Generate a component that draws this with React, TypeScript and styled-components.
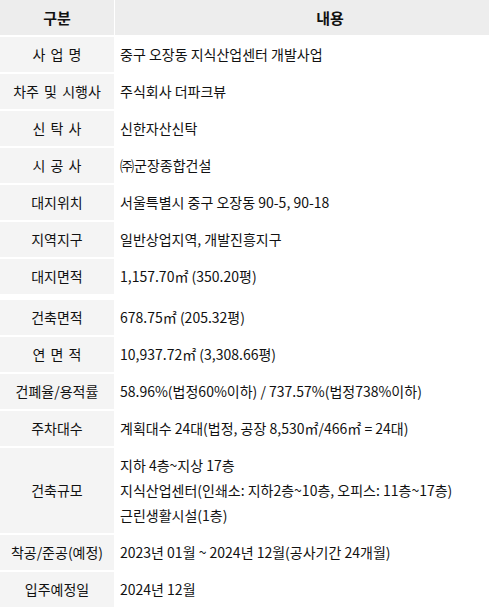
import styled, { createGlobalStyle } from "styled-components";

const GlobalStyle = createGlobalStyle`
  html, body {
    margin: 0;
    padding: 0;
    background: #fff;
    overflow: hidden;
  }
  body {
    font-family: "Noto Sans CJK KR", "Noto Sans", sans-serif;
    color: #111;
  }
`;

const Frame = styled.div`
  width: 489px;
  overflow: hidden;
`;

const Table = styled.table`
  width: 545px;
  border-collapse: separate;
  border-spacing: 0;
  table-layout: fixed;
  font-size: 14px;
`;

const HeadCell = styled.th<{ $first?: boolean }>`
  height: 35px;
  padding: 0;
  background: #ededed;
  font-size: 15px;
  font-weight: 700;
  color: #111;
  text-align: center;
  border-bottom: 2px solid #fff;
  border-right: ${(p) => (p.$first ? "1px solid #fff" : "none")};
  width: ${(p) => (p.$first ? "114px" : "auto")};
`;

const Label = styled.td<{ $break?: boolean }>`
  background: #f4f4f4;
  text-align: center;
  padding: 5px 0;
  line-height: 25px;
  color: #111;
  white-space: nowrap;
  word-spacing: 2px;
  border-right: 1px solid #fff;
  border-bottom: 2px solid #fff;
  border-top: ${(p) => (p.$break ? "4px solid #fff" : "none")};
`;

const Value = styled.td<{ $break?: boolean }>`
  padding: 5px 0 5px 5px;
  line-height: 25px;
  color: #111;
  white-space: nowrap;
  border-bottom: 2px solid #fff;
  border-top: ${(p) => (p.$break ? "4px solid #fff" : "none")};
`;

type Row = { label: string; lines: string[]; gap?: boolean };

const rows: Row[] = [
  { label: "사 업 명", lines: ["중구 오장동 지식산업센터 개발사업"] },
  { label: "차주 및 시행사", lines: ["주식회사 더파크뷰"] },
  { label: "신 탁 사", lines: ["신한자산신탁"] },
  { label: "시 공 사", lines: ["㈜군장종합건설"] },
  { label: "대지위치", lines: ["서울특별시 중구 오장동 90-5, 90-18"] },
  { label: "지역지구", lines: ["일반상업지역, 개발진흥지구"] },
  { label: "대지면적", lines: ["1,157.70㎡ (350.20평)"] },
  { label: "건축면적", lines: ["678.75㎡ (205.32평)"], gap: true },
  { label: "연 면 적", lines: ["10,937.72㎡ (3,308.66평)"] },
  { label: "건폐율/용적률", lines: ["58.96%(법정60%이하) / 737.57%(법정738%이하)"] },
  { label: "주차대수", lines: ["계획대수 24대(법정, 공장 8,530㎡/466㎡ = 24대)"] },
  {
    label: "건축규모",
    lines: [
      "지하 4층~지상 17층",
      "지식산업센터(인쇄소: 지하2층~10층, 오피스: 11층~17층)",
      "근린생활시설(1층)",
    ],
  },
  { label: "착공/준공(예정)", lines: ["2023년 01월 ~ 2024년 12월(공사기간 24개월)"] },
  { label: "입주예정일", lines: ["2024년 12월"] },
];

const App = () => {
  return (
    <Frame>
      <GlobalStyle />
      <Table>
        <thead>
          <tr>
            <HeadCell $first>구분</HeadCell>
            <HeadCell>내용</HeadCell>
          </tr>
        </thead>
        <tbody>
          {rows.map((r) => (
            <tr key={r.label}>
              <Label $break={r.gap}>{r.label}</Label>
              <Value $break={r.gap}>
                {r.lines.map((l, i) => (
                  <div key={i}>{l}</div>
                ))}
              </Value>
            </tr>
          ))}
        </tbody>
      </Table>
    </Frame>
  );
};

export default App;
